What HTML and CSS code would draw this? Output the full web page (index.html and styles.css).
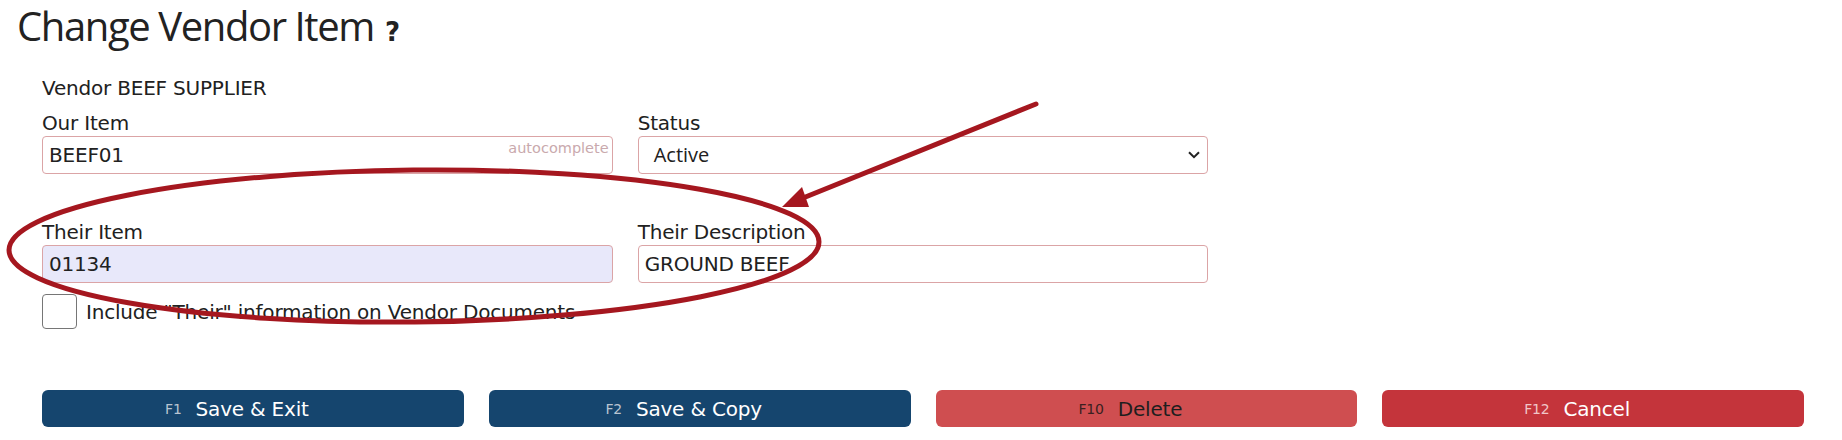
FILE: index.html
```html
<!DOCTYPE html>
<html lang="en">
<head>
<meta charset="utf-8">
<title>Change Vendor Item</title>
<link rel="stylesheet" href="styles.css">
</head>
<body>
<div class="page">
  <h1 class="title">Change Vendor Item <span class="help">?</span></h1>
  <div class="form">
    <div class="vendor">Vendor BEEF SUPPLIER</div>
    <div class="grid">
      <div class="field">
        <div class="label">Our Item</div>
        <div class="input">BEEF01<span class="hint">autocomplete</span></div>
      </div>
      <div class="field">
        <div class="label">Status</div>
        <div class="input select"><span class="select-text">Active</span>
          <svg class="chevron" width="12" height="8" viewBox="0 0 12 8"><path d="M1 1.2 L6 6.2 L11 1.2" fill="none" stroke="#222" stroke-width="2"/></svg>
        </div>
      </div>
    </div>
    <div class="grid row2">
      <div class="field">
        <div class="label">Their Item</div>
        <div class="input filled">01134</div>
      </div>
      <div class="field">
        <div class="label">Their Description</div>
        <div class="input">GROUND BEEF</div>
      </div>
    </div>
    <div class="check"><span class="box"></span><span>Include "Their" information on Vendor Documents</span></div>
    <div class="buttons">
      <div class="btn btn-blue"><span class="key">F1</span>Save &amp; Exit</div>
      <div class="btn btn-blue"><span class="key">F2</span>Save &amp; Copy</div>
      <div class="btn btn-delete"><span class="key">F10</span>Delete</div>
      <div class="btn btn-cancel"><span class="key">F12</span>Cancel</div>
    </div>
  </div>
  <svg class="annot" width="1842" height="440" viewBox="0 0 1842 440">
    <ellipse cx="414" cy="246" rx="405" ry="76" fill="none" stroke="#a5171f" stroke-width="5" transform="rotate(-0.6 414 246)"/>
    <line x1="1036" y1="104" x2="798" y2="200" stroke="#a5171f" stroke-width="5" stroke-linecap="round"/>
    <polygon points="782,207 802,187 809,207" fill="#a5171f"/>
  </svg>
</div>
</body>
</html>
```
FILE: styles.css
```css
html, body {
  margin: 0;
  padding: 0;
  background: #ffffff;
}
body {
  color: #212121;
  font-family: "DejaVu Sans", sans-serif;
  font-size: 20px;
  letter-spacing: -0.2px;
}
.page {
  position: relative;
  width: 1842px;
  height: 440px;
  padding-top: 2px;
  box-sizing: border-box;
}
.title {
  margin: 0 0 0 17px;
  height: 48px;
  font-family: "Open Sans", sans-serif;
  font-weight: 400;
  font-size: 40px;
  line-height: 48px;
  letter-spacing: -1.4px;
  color: #222;
  white-space: nowrap;
}
.help {
  font-family: "DejaVu Sans", sans-serif;
  font-weight: 700;
  font-size: 26px;
  line-height: 1;
  letter-spacing: 0;
  margin-left: 2px;
}
.form {
  margin: 26px 38px 0 42px;
}
.vendor {
  line-height: 24px;
}
.grid {
  display: grid;
  grid-template-columns: repeat(3, 1fr);
  column-gap: 25px;
  margin-top: 11px;
}
.grid.row2 {
  margin-top: 46px;
}
.label {
  line-height: 24px;
  margin-bottom: 1px;
}
.input {
  position: relative;
  height: 38px;
  box-sizing: border-box;
  border: 1px solid #dba4a6;
  border-radius: 4px;
  padding: 0 6px;
  display: flex;
  align-items: center;
  line-height: 24px;
  background: #fff;
}
.input.filled {
  background: #e8e8fa;
}
.hint {
  position: absolute;
  right: 3px;
  top: 1px;
  font-size: 14.5px;
  letter-spacing: 0;
  line-height: 20px;
  color: #c9a9ad;
}
.select {
  padding-left: 15px;
  justify-content: space-between;
  padding-right: 7px;
}
.select-text {
  font-family: "Open Sans", sans-serif;
  font-size: 20px;
  letter-spacing: 0;
}
.check {
  display: flex;
  align-items: center;
  gap: 9px;
  margin-top: 11px;
  line-height: 24px;
}
.box {
  width: 35px;
  height: 35px;
  box-sizing: border-box;
  border: 1px solid #767676;
  border-radius: 4px;
  background: #fff;
}
.buttons {
  display: grid;
  grid-template-columns: repeat(4, 1fr);
  column-gap: 25px;
  margin-top: 61px;
}
.btn {
  height: 37px;
  border-radius: 6px;
  display: flex;
  align-items: center;
  justify-content: center;
  padding-right: 32px;
  color: #fff;
  font-size: 20px;
}
.key {
  font-size: 14px;
  margin-right: 14px;
  color: #b9c4d1;
}
.btn-blue {
  background: #15456e;
}
.btn-delete {
  background: #cf4e50;
  color: #1e1e1e;
}
.btn-delete .key {
  color: #3a2020;
}
.btn-cancel {
  background: #c4343b;
}
.btn-cancel .key {
  color: #f0c6c8;
}
.annot {
  position: absolute;
  left: 0;
  top: 0;
  pointer-events: none;
}
```
